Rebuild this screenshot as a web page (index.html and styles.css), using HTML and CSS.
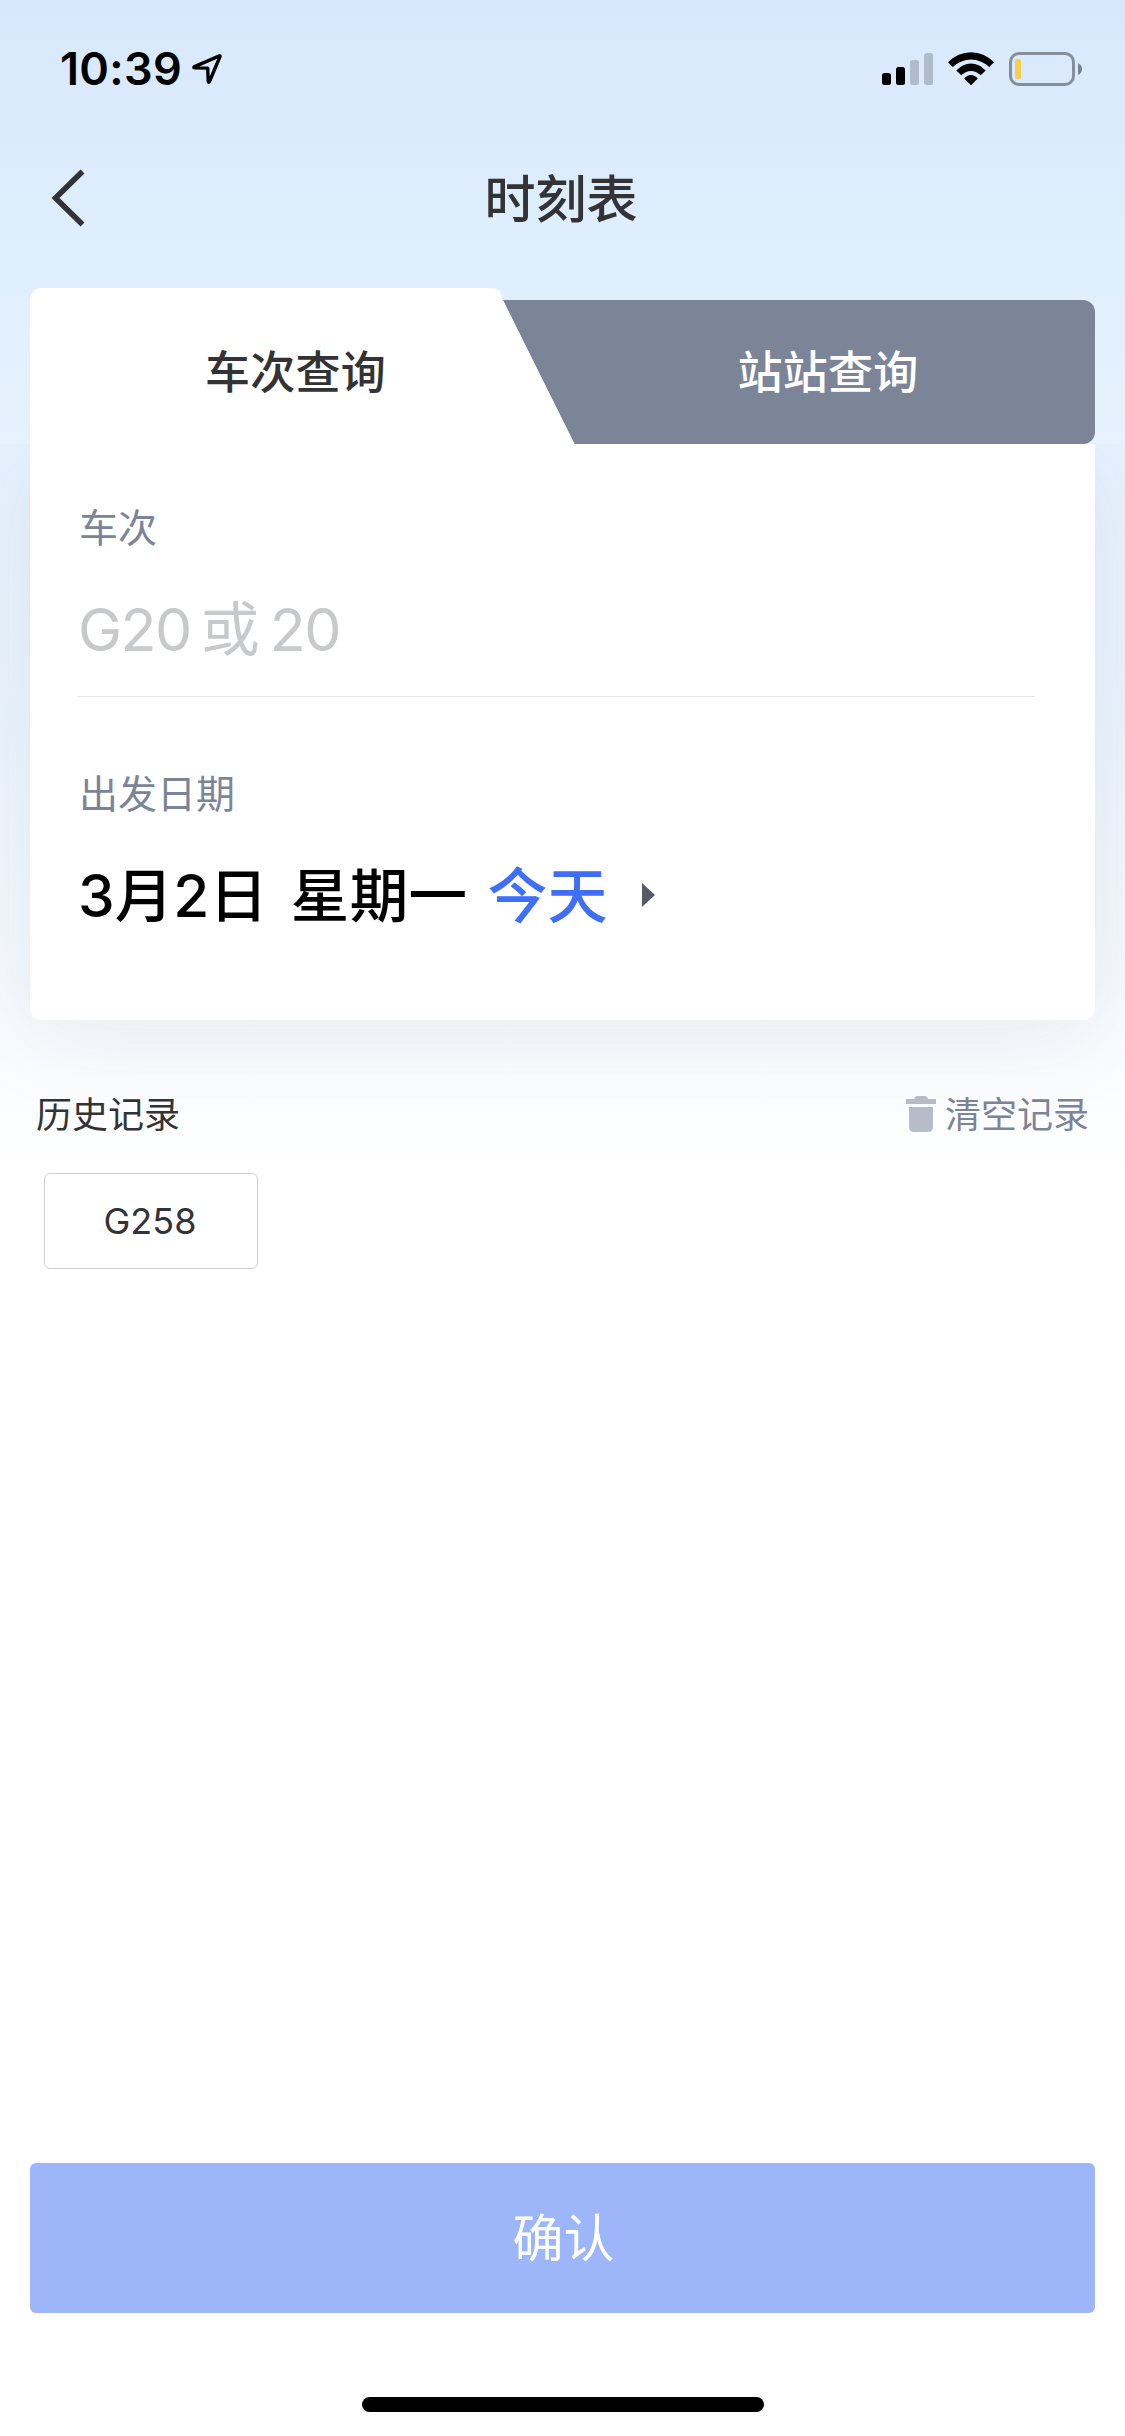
FILE: index.html
```html
<!DOCTYPE html>
<html lang="zh-CN">
<head>
<meta charset="utf-8">
<title>时刻表</title>
<link rel="stylesheet" href="styles.css">
</head>
<body>
<div class="screen">
  <header class="status">
    <div class="status-left">
      <span class="time">10:39</span>
      <svg class="location" width="32" height="34" viewBox="0 0 32 34"><path d="M28.4 3.9 3.6 14.6q-1.6.9.2 1.3l12.9.2.5 13.2q.4 1.8 1.3.2L29 4.6q.2-1-.6-.7Z" fill="none" stroke="#000" stroke-width="3.4" stroke-linejoin="round"/></svg>
    </div>
    <div class="status-right">
      <svg width="51" height="34" viewBox="0 0 51 34"><rect y="21" width="9" height="12" rx="2.5"/><rect x="14" y="15" width="9" height="18" rx="2.5"/><g fill="#b0bccb"><rect x="28" y="8" width="9" height="25" rx="2.5"/><rect x="42" y="1" width="9" height="32" rx="2.5"/></g></svg>
      <svg width="46" height="34" viewBox="0 0 46 34"><path d="M0 10.2Q10 .2 23 .2T46 10.2L41.2 15Q33 7.500 23 7.500T4.800 15ZM8.300 18.500Q15 11.500 23 11.500T37.700 18.500L32.700 23.300Q28 19 23 19T13.300 23.300ZM16.200 26.500Q19 23 23 23T29.800 26.500L23 33.200Z"/></svg>
      <svg width="74" height="34" viewBox="0 0 74 34"><rect x="1.500" y="1.500" width="63" height="31" rx="8.500" fill="none" stroke="#848f9b" stroke-width="3"/><rect x="6" y="7" width="6" height="20" rx="2" fill="#f7ce45"/><path d="M69 11q4 2 4 6t-4 6Z" fill="#79838e"/></svg>
    </div>
  </header>
  <nav class="navbar">
    <svg class="back" width="36" height="60" viewBox="0 0 36 60"><path d="M32.500 3.500 5.500 30l27 26.500" fill="none" stroke="#333336" stroke-width="5.6"/></svg>
    <h1 class="title">时刻表</h1>
  </nav>
  <main class="content">
    <div class="tabs">
      <svg class="tabs-shape" width="1065" height="156" viewBox="0 0 1065 156"><path d="M472.500 12h580.500a12 12 0 0 1 12 12v120a12 12 0 0 1-12 12H544.500Z" fill="#7c8497"/><path d="M0 156V12A12 12 0 0 1 12 0h449q10 0 11.500 11L544.500 156Z" fill="#fff"/></svg>
      <div class="tab tab-active">车次查询</div>
      <div class="tab tab-other">站站查询</div>
    </div>
    <section class="card">
      <div class="label">车次</div>
      <div class="train"><span class="num">G20</span><span class="or">或</span><span class="num">20</span></div>
      <div class="label label-date">出发日期</div>
      <div class="date"><span class="day">3月2日</span><span class="weekday">星期一</span><span class="today">今天</span><svg class="caret" width="13" height="24" viewBox="0 0 13 24"><path d="M0 0 13 12 0 24Z" fill="#575b69"/></svg></div>
    </section>
    <section class="history">
      <div class="history-head">
        <span>历史记录</span>
        <span class="clear"><svg class="trash" width="30" height="36" viewBox="0 0 30 36"><path d="M0 3h8q1-3 3-3h8q2 0 3 3h8v5H0ZM3 11h24v20q0 5-5 5H8q-5 0-5-5Z" fill="#b8bcc9"/></svg>清空记录</span>
      </div>
      <div class="chip">G258</div>
    </section>
  </main>
  <footer class="footer">
    <div class="confirm">确认</div>
    <div class="home-bar"></div>
  </footer>
</div>
</body>
</html>
```
FILE: styles.css
```css
* { box-sizing: border-box; }
body {
  margin: 0;
  font-family: Inter, "Noto Sans CJK SC", sans-serif;
  color: #333336;
}
svg { display: block; flex: none; }
.screen {
  display: flex;
  flex-direction: column;
  width: 1125px;
  height: 2436px;
  overflow: hidden;
  background: linear-gradient(#d8e8fc 0, #e0effd 270px, #e6f2fe 444px, #ebf4fd 720px, #fff 1180px);
}
.status {
  display: flex;
  justify-content: space-between;
  height: 132px;
  padding: 52px 42px 0 60px;
}
.status-left { display: flex; height: 34px; align-items: center; }
.time { width: 131px; color: #000; font-size: 45px; font-weight: 600; line-height: 34px; letter-spacing: .3px; white-space: nowrap; }
.status-right { display: flex; gap: 15px; }
.navbar {
  display: grid;
  grid-template-columns: 200px 1fr 203px;
  align-items: center;
  height: 132px;
}
.back { margin-left: 50px; }
.title { margin: 0; padding-top: 4px; text-align: center; font-size: 51px; font-weight: 500; line-height: 60px; }
.content { padding: 24px 30px 0; }
.tabs { display: grid; grid-template-columns: 531px 534px; height: 156px; }
.tabs-shape { grid-area: 1 / 1 / 2 / 3; }
.tab { grid-row: 1; z-index: 1; text-align: center; font-size: 45px; font-weight: 500; line-height: 170px; letter-spacing: .3px; }
.tab-active { grid-column: 1; }
.tab-other { grid-column: 2; color: #fff; }
.card {
  height: 576px;
  padding: 54px 60px 0 48px;
  background: #fff;
  border-radius: 0 0 12px 12px;
  box-shadow: 0 15px 90px rgba(90, 90, 130, .1);
  clip-path: inset(0 -30px -150px -30px);
}
.label { padding-left: 1px; color: #7c8497; font-size: 39px; line-height: 60px; }
.train {
  display: flex;
  align-items: center;
  height: 139px;
  border-bottom: 1px solid #e5e6e8;
  color: #c8c9cb;
  font-size: 59px;
}
.num { padding-top: 4px; letter-spacing: -1.5px; }
.or { margin: 0 10px 3px 10px; }
.label-date { margin-top: 67px; }
.date { display: flex; align-items: center; height: 134px; color: #000; font-size: 58.5px; font-weight: 500; white-space: nowrap; }
.weekday { margin-left: 23px; letter-spacing: .4px; }
.today { margin: 0 35px 0 20px; color: #3e6ff6; font-size: 60px; }
.caret { margin-top: 8px; }
.history { padding-top: 65px; }
.history-head { display: flex; justify-content: space-between; padding: 0 6px; font-size: 36px; line-height: 60px; }
.clear { display: flex; align-items: center; gap: 9px; color: #7c8497; }
.trash { margin-bottom: 2px; }
.chip {
  width: 214px;
  height: 96px;
  margin: 28px 0 0 14px;
  padding-right: 2px;
  border: 1px solid #d0d1d7;
  border-radius: 6px;
  background: #fff;
  font-size: 36px;
  line-height: 94px;
  text-align: center;
}
.footer { margin-top: auto; padding: 0 30px 24px; }
.confirm { height: 150px; border-radius: 6px; background: #9cb6f9; color: #fff; font-size: 51px; line-height: 151px; text-align: center; text-indent: 2px; }
.home-bar { width: 402px; height: 15px; margin: 84px auto 0; border-radius: 8px; background: #000; }
```
